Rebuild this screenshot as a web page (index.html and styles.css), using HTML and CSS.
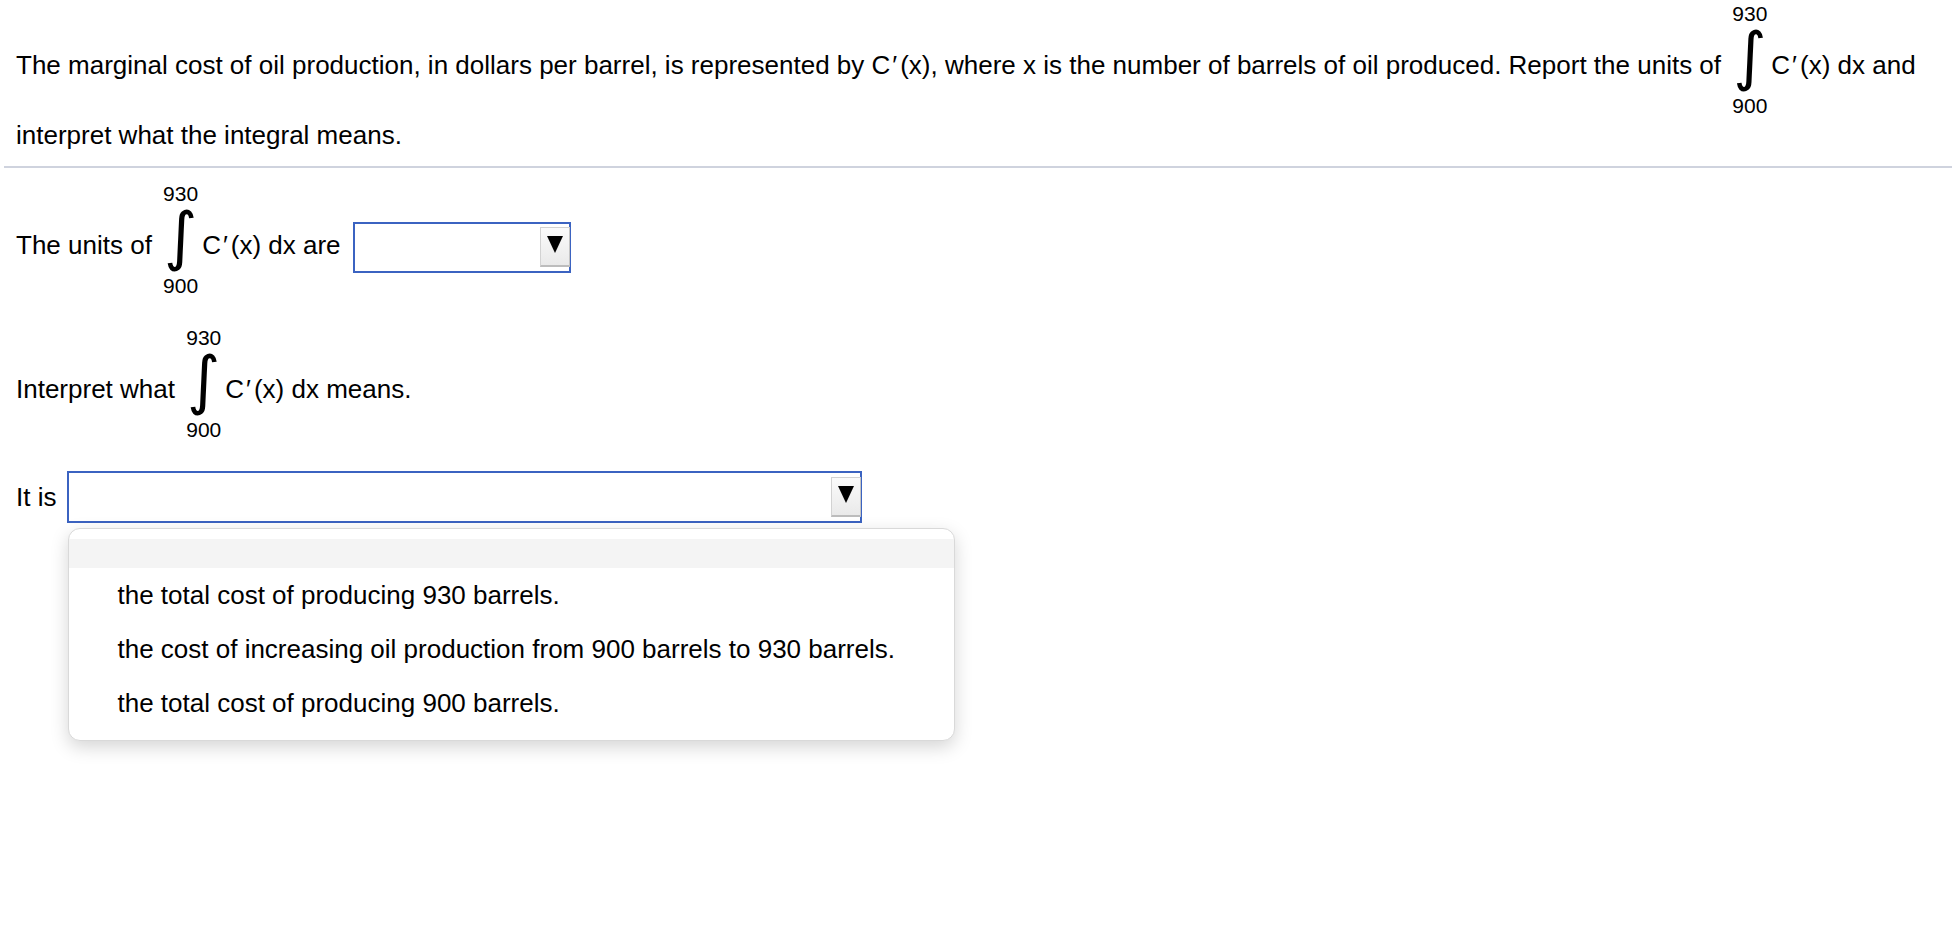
FILE: index.html
```html
<!DOCTYPE html>
<html lang="en">
<head>
<meta charset="utf-8">
<title>Marginal cost integral</title>
<link rel="stylesheet" href="styles.css">
</head>
<body>
<div class="page">
  <p class="stem">The marginal cost of oil production, in dollars per barrel, is represented by C<span class="pr">′</span>(x), where x is the number of barrels of oil produced. Report the units of <span class="intg"><span class="lim">930</span><span class="sign">∫</span><span class="lim">900</span></span>C<span class="pr">′</span>(x) dx and interpret what the integral means.</p>
  <hr class="rule">
  <div class="answers">
    <p class="row first">The units of <span class="intg"><span class="lim">930</span><span class="sign">∫</span><span class="lim">900</span></span>C<span class="pr">′</span>(x) dx are <span class="select small"><span class="btn"><span class="tri"></span></span></span></p>
    <p class="row">Interpret what <span class="intg"><span class="lim">930</span><span class="sign">∫</span><span class="lim">900</span></span>C<span class="pr">′</span>(x) dx means.</p>
    <div class="row pick">
      <span class="label">It is</span>
      <div class="select wide">
        <span class="btn"><span class="tri"></span></span>
        <ul class="menu">
          <li class="opt blank"></li>
          <li class="opt">the total cost of producing 930 barrels.</li>
          <li class="opt">the cost of increasing oil production from 900 barrels to 930 barrels.</li>
          <li class="opt">the total cost of producing 900 barrels.</li>
        </ul>
      </div>
    </div>
  </div>
</div>
</body>
</html>
```
FILE: styles.css
```css
* { box-sizing: border-box; }
html, body { margin: 0; padding: 0; background: #fff; }
body {
  font-family: "Liberation Sans", Arial, Helvetica, sans-serif;
  font-size: 26px;
  line-height: 30px;
  color: #000;
  min-height: 928px;
}
.page { padding: 3px 0 0 4px; min-height: 928px; }
.stem { margin: 0; padding: 0 16px 0 12px; line-height: 38px; }
.rule {
  margin: 12px 0 0 0;
  border: 0;
  height: 2px;
  background: #cfd3de;
}
.answers { padding-left: 12px; }
.row { margin: 31px 0 0 0; }
.row.first { margin-top: 15px; }
.pr { display: inline-block; margin: 0 3px 0 2px; }
.intg {
  display: inline-flex;
  flex-direction: column;
  align-items: center;
  vertical-align: 53px;
  margin: 0 4px 0 4px;
  line-height: 21px;
}
.lim { font-size: 21px; line-height: 21px; height: 21px; }
.sign {
  height: 71px;
  width: 24px;
  display: flex;
  align-items: center;
  justify-content: center;
  padding-bottom: 8px;
  font-family: "DejaVu Sans", sans-serif;
  font-size: 64px;
  line-height: 1;
  overflow: visible;
}
.select {
  display: inline-flex;
  align-items: center;
  justify-content: flex-end;
  height: 51px;
  border: 2px solid #3b63c1;
  background: #fff;
  position: relative;
}
.select.small { width: 218px; vertical-align: middle; margin-left: 5px; }
.select.wide { width: 795px; height: 52px; }
.btn {
  width: 30px;
  height: 40px;
  margin-right: -1px;
  display: flex;
  align-items: center;
  justify-content: center;
  padding-bottom: 4px;
  background: linear-gradient(#fbfbfb, #e9e9e9);
  border: 1px solid #d2d2d2;
  border-bottom: 2px solid #bcbcbc;
  border-right-color: #c4c4c4;
}
.tri {
  width: 0; height: 0;
  border-left: 8.5px solid transparent;
  border-right: 8.5px solid transparent;
  border-top: 17px solid #000;
}
.pick { display: flex; align-items: center; column-gap: 11px; }
.menu {
  position: absolute;
  left: -1px;
  top: calc(100% + 7px);
  width: 887px;
  margin: 0;
  padding: 10px 0;
  list-style: none;
  background: #fff;
  border: 1px solid #d9d9d9;
  border-radius: 12px;
  box-shadow: 0 6px 18px rgba(0,0,0,0.17);
  z-index: 5;
}
.opt { height: 54px; line-height: 54px; padding-left: 48px; white-space: nowrap; }
.opt.blank { height: 29px; background: #f4f4f4; }
```
